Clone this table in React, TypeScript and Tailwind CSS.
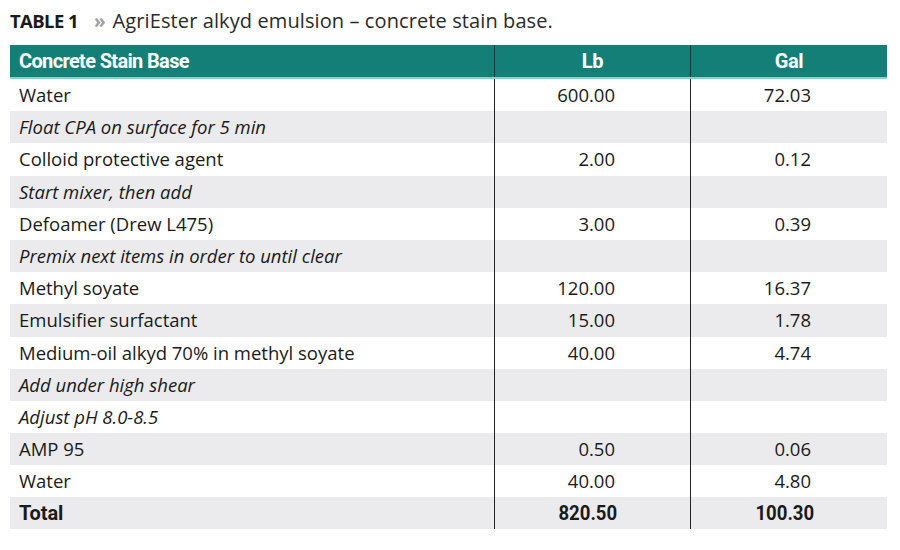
import React from "react";

type Row = { label: string; lb?: string; gal?: string; italic?: boolean };

const rows: Row[] = [
  { label: "Water", lb: "600.00", gal: "72.03" },
  { label: "Float CPA on surface for 5 min", italic: true },
  { label: "Colloid protective agent", lb: "2.00", gal: "0.12" },
  { label: "Start mixer, then add", italic: true },
  { label: "Defoamer (Drew L475)", lb: "3.00", gal: "0.39" },
  { label: "Premix next items in order to until clear", italic: true },
  { label: "Methyl soyate", lb: "120.00", gal: "16.37" },
  { label: "Emulsifier surfactant", lb: "15.00", gal: "1.78" },
  { label: "Medium-oil alkyd 70% in methyl soyate", lb: "40.00", gal: "4.74" },
  { label: "Add under high shear", italic: true },
  { label: "Adjust pH 8.0-8.5", italic: true },
  { label: "AMP 95", lb: "0.50", gal: "0.06" },
  { label: "Water", lb: "40.00", gal: "4.80" },
];

const cond = { fontFamily: "Roboto, 'Liberation Sans', sans-serif" };

export default function App() {
  return (
    <div
      className="w-[900px] h-[550px] bg-white text-[#1a1a1a] overflow-hidden"
      style={{ fontFamily: "'Open Sans', 'Noto Sans', sans-serif" }}
    >
      <div className="pl-[10px] pt-[8px] h-[45px] leading-[26px] text-[#2a2a2a] whitespace-nowrap">
        <span className="font-bold text-[#1a1a1a] text-[18.5px] tracking-[-0.6px]">TABLE 1</span>
        <span className="text-[#a0a0a0] font-bold text-[19px] ml-[16px] mr-[7px]">»</span>
        <span className="text-[20px] tracking-[0.1px]">AgriEster alkyd emulsion – concrete stain base.</span>
      </div>
      <div className="ml-[10px] w-[877px]">
        <div className="grid grid-cols-[484px_196px_197px] h-[34px] bg-[#137f76] text-white border-b-2 border-[#7fd6cc]">
          <div
            className="pl-[9px] text-[20px] font-bold leading-[32px] tracking-[-0.65px] whitespace-nowrap"
            style={cond}
          >
            Concrete Stain Base
          </div>
          <div
            className="border-l border-[#0d3b37] text-center text-[20px] font-bold leading-[32px] tracking-[-0.4px]"
            style={cond}
          >
            Lb
          </div>
          <div
            className="border-l border-[#0d3b37] text-center text-[20px] font-bold leading-[32px] tracking-[-0.4px]"
            style={cond}
          >
            Gal
          </div>
        </div>
        {rows.map((r, i) => {
          const bg = i % 2 === 1 ? "bg-[#ebebed]" : "bg-white";
          return (
            <div key={i} className={`grid grid-cols-[484px_196px_197px] h-[32.2px] ${bg} text-[18.5px] leading-[32px]`}>
              <div className={`pl-[9px] whitespace-nowrap ${r.italic ? "italic" : ""}`}>{r.label}</div>
              <div className="border-l border-[#222] text-right pr-[75px]">{r.lb ?? ""}</div>
              <div className="border-l border-[#222] text-right pr-[76px]">{r.gal ?? ""}</div>
            </div>
          );
        })}
        <div className="grid grid-cols-[484px_196px_197px] h-[32px] bg-[#ebebed] text-[20px] font-bold leading-[32px]" style={cond}>
          <div className="pl-[9px] tracking-[-0.1px]">Total</div>
          <div className="border-l border-[#222] text-right pr-[73px]">
            <span className="inline-block scale-x-[0.93] origin-right">820.50</span>
          </div>
          <div className="border-l border-[#222] text-right pr-[73px]">
            <span className="inline-block scale-x-[0.93] origin-right">100.30</span>
          </div>
        </div>
      </div>
    </div>
  );
}
